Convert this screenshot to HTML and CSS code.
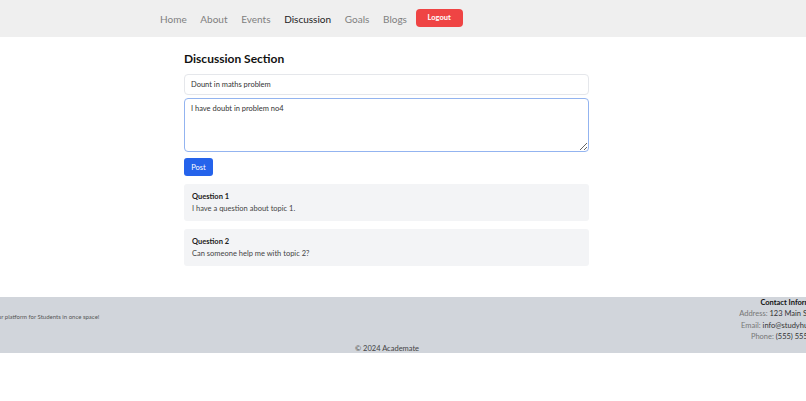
FILE: index.html
```html
<!DOCTYPE html>
<html lang="en">
<head>
<meta charset="utf-8">
<title>Academate - Discussion</title>
<link rel="stylesheet" href="styles.css">
</head>
<body>
<header class="topbar">
  <nav class="nav">
    <a class="nav-link" href="#">Home</a>
    <a class="nav-link" href="#">About</a>
    <a class="nav-link" href="#">Events</a>
    <a class="nav-link active" href="#">Discussion</a>
    <a class="nav-link" href="#">Goals</a>
    <a class="nav-link" href="#">Blogs</a>
    <button class="logout" type="button">Logout</button>
  </nav>
</header>

<main class="main">
  <h2 class="title">Discussion Section</h2>
  <input class="field" type="text" value="Dount in maths problem">
  <textarea class="area">I have doubt in problem no4</textarea>
  <button class="post" type="button">Post</button>

  <div class="question">
    <div class="q-title">Question 1</div>
    <div class="q-body">I have a question about topic 1.</div>
  </div>
  <div class="question">
    <div class="q-title">Question 2</div>
    <div class="q-body">Can someone help me with topic 2?</div>
  </div>
</main>

<footer class="footer">
  <div class="footer-inner">
    <div class="footer-row">
      <p class="tagline">Academate: Your platform for Students in once space!</p>
      <div class="contact">
        <div class="contact-title">Contact Information</div>
        <div><span class="label">Address:</span> 123 Main St, City.</div>
        <div><span class="label">Email:</span> info@studyhub.com</div>
        <div><span class="label">Phone:</span> (555) 555-5555</div>
      </div>
    </div>
    <div class="copy">© 2024 Academate</div>
  </div>
</footer>
</body>
</html>
```

FILE: styles.css
```css
* { box-sizing: border-box; }

html, body {
  margin: 0;
  padding: 0;
  background: #ffffff;
  font-family: "Lato", "Noto Sans", "DejaVu Sans", sans-serif;
  color: #1f2937;
  overflow-x: hidden;
}

.topbar {
  background: #efefef;
  height: 37px;
  display: flex;
  align-items: center;
  padding-left: 160px;
}

.nav {
  display: flex;
  align-items: center;
  gap: 13.7px;
}

.nav-link {
  text-decoration: none;
  color: #808080;
  font-size: 10px;
}

.nav-link.active {
  color: #222222;
}

.logout {
  background: #ef4444;
  color: #ffffff;
  border: none;
  border-radius: 4px;
  font-family: inherit;
  font-weight: 700;
  font-size: 7.5px;
  height: 18px;
  width: 47px;
  padding: 0;
  margin-left: -5px;
  margin-top: -2px;
}

.main {
  width: 405px;
  margin-left: 184px;
  padding: 14px 0 23px;
  display: flex;
  flex-direction: column;
}

.title {
  margin: 0 0 7px;
  font-size: 12px;
  font-weight: 700;
  color: #111111;
  line-height: 16px;
}

.field {
  height: 21px;
  border: 1px solid #e5e7eb;
  border-radius: 4px;
  padding: 0 6px;
  font-family: inherit;
  font-size: 7.5px;
  color: #333333;
  margin: 0 0 3px;
}

.area {
  height: 54px;
  border: 1px solid #93b4f0;
  border-radius: 4px;
  padding: 5px 6px;
  font-family: inherit;
  font-size: 7.5px;
  color: #333333;
  resize: vertical;
  margin: 0 0 6px;
  outline: none;
}

.post {
  align-self: flex-start;
  width: 29px;
  height: 18px;
  background: #2563eb;
  color: #ffffff;
  border: none;
  border-radius: 3px;
  font-family: inherit;
  font-size: 7.5px;
  padding: 0;
  margin-bottom: 8px;
}

.question {
  background: #f3f4f6;
  border-radius: 3px;
  height: 37px;
  padding: 8px 8px;
  margin-bottom: 8px;
  display: flex;
  flex-direction: column;
  justify-content: center;
  gap: 1px;
}

.q-title {
  font-size: 7.5px;
  font-weight: 700;
  color: #222222;
  line-height: 11px;
}

.q-body {
  font-size: 7.5px;
  color: #444444;
  line-height: 11px;
}

.footer {
  background: #d1d5db;
  height: 56px;
  overflow: hidden;
}

.footer-inner {
  margin-left: -54px;
  margin-right: -22px;
}

.footer-row {
  display: flex;
  justify-content: space-between;
  align-items: center;
}

.tagline {
  margin: 0 0 7px;
  padding-left: 13px;
  font-size: 6px;
  color: #555555;
}

.contact {
  text-align: right;
  font-size: 7.5px;
  line-height: 11.4px;
  color: #333333;
}

.contact-title {
  font-weight: 700;
  color: #111111;
}

.label {
  color: #777777;
}

.copy {
  text-align: center;
  font-size: 7.5px;
  color: #444444;
  margin-top: 1px;
}
```
